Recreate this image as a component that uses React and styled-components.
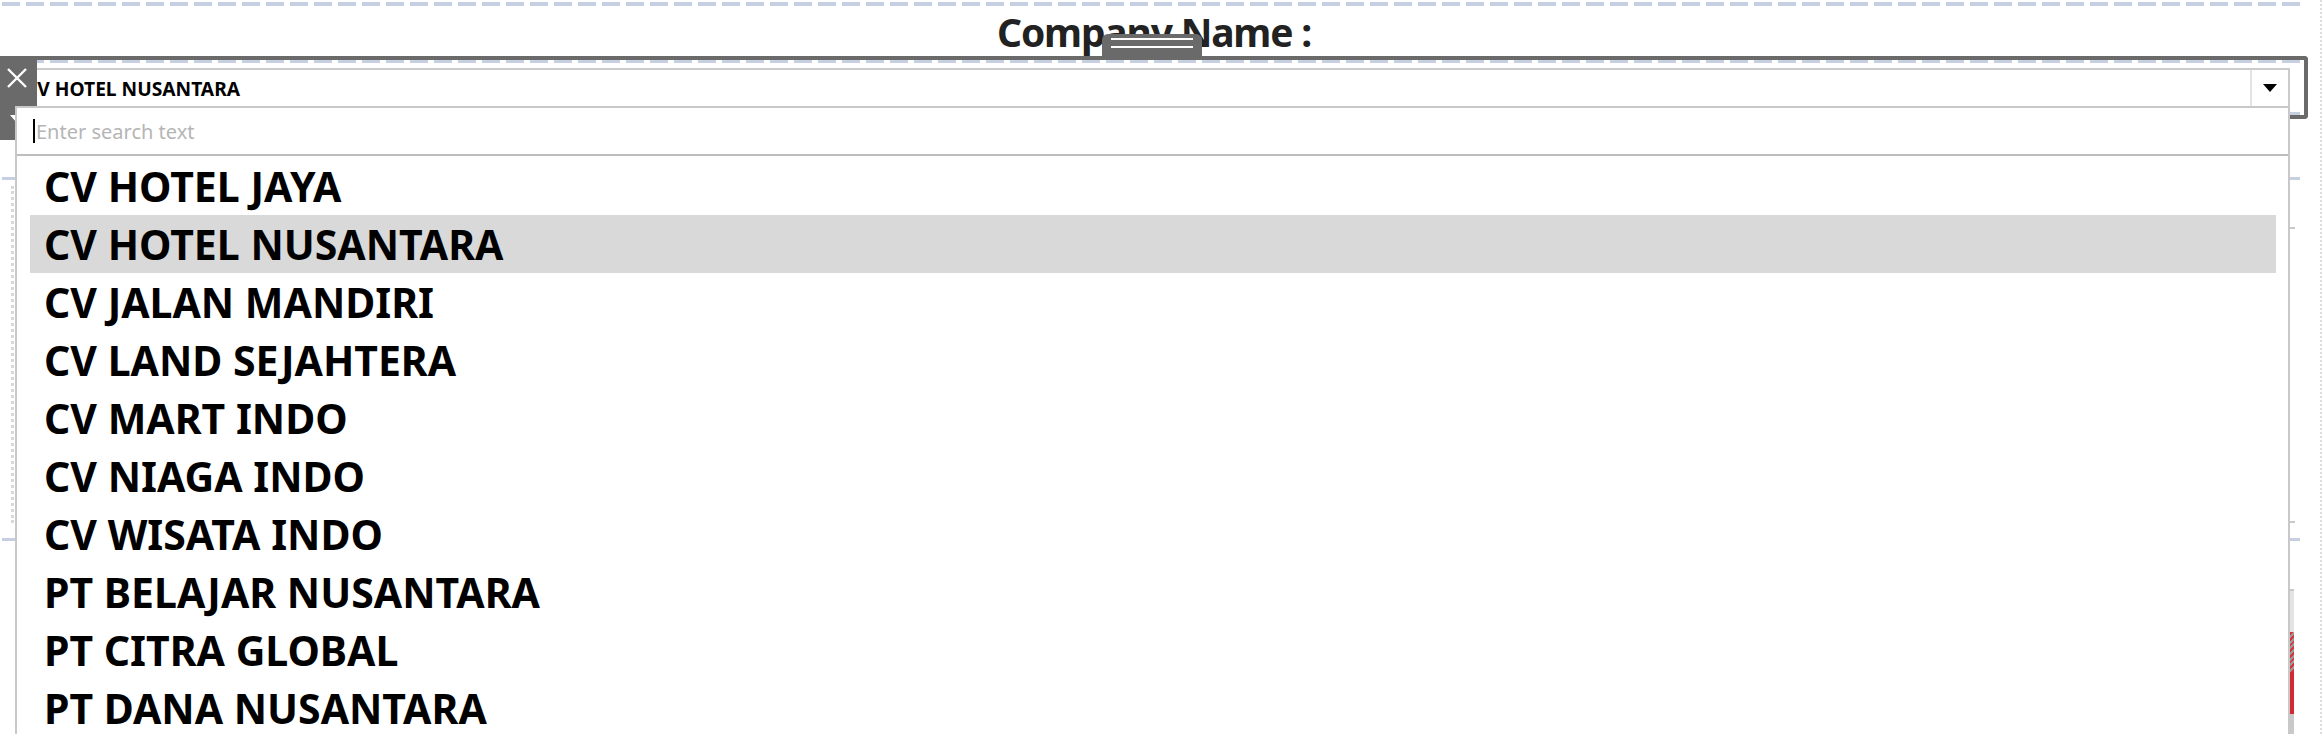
import React from 'react'
import styled, { createGlobalStyle } from 'styled-components'

const GlobalStyle = createGlobalStyle`
  html, body {
    margin: 0;
    padding: 0;
    background: #fff;
    overflow: hidden;
  }
  body {
    font-family: 'Noto Sans', 'Open Sans', sans-serif;
  }
`

const companies = [
  'CV HOTEL JAYA',
  'CV HOTEL NUSANTARA',
  'CV JALAN MANDIRI',
  'CV LAND SEJAHTERA',
  'CV MART INDO',
  'CV NIAGA INDO',
  'CV WISATA INDO',
  'PT BELAJAR NUSANTARA',
  'PT CITRA GLOBAL',
  'PT DANA NUSANTARA',
]

function App() {
  const selected = 'CV HOTEL NUSANTARA'

  return (
    <>
      <GlobalStyle />
      <Page>
        <Dashboard>
          <DashRule $h={4} $mt={2} />
          <TitleZone>Company Name :</TitleZone>

          <FilterFrame>
            <DashRule $h={3} />
            <ComboBox>
              <ComboValue>{selected}</ComboValue>
              <DropButton>
                <Caret />
              </DropButton>
            </ComboBox>
            <DashRule $h={3} $mt="auto" />
          </FilterFrame>

          <LowerZone>
            <DashRule $h={3} />
            <ZoneBody>
              <DottedGuide />
              <SideTicks>
                <Tick />
                <Tick />
              </SideTicks>
            </ZoneBody>
            <DashRule $h={3} />
          </LowerZone>

          <LegendZone>
            <LegendBar>
              <BarSeg $c="#e4e4e4" $h={41} />
              <BarSeg $dotted $h={40} />
              <BarSeg $c="#d22a2e" $h={42} />
              <BarSeg $c="#c9c9c9" $h={20} />
            </LegendBar>
          </LegendZone>
        </Dashboard>
        <Gutter />

        <ToolStrip>
          <svg width="20" height="20" viewBox="0 0 20 20">
            <path d="M1 1 L19 19 M19 1 L1 19" stroke="#fff" strokeWidth="2.4" fill="none" />
          </svg>
          <StripCaret />
        </ToolStrip>

        <Handle>
          <Grip />
          <Grip />
        </Handle>

        <Popup>
          <SearchRow>
            <TextCursor />
            <Placeholder>Enter search text</Placeholder>
          </SearchRow>
          <List>
            {companies.map((name) => (
              <Item key={name} $active={name === selected}>
                {name}
              </Item>
            ))}
          </List>
        </Popup>
      </Page>
    </>
  )
}

const Page = styled.div`
  position: relative;
  display: flex;
  width: 2322px;
  height: 734px;
  overflow: hidden;
`

const Dashboard = styled.div`
  display: flex;
  flex-direction: column;
  width: 2308px;
  flex-shrink: 0;
`

const Gutter = styled.div`
  flex: 1;
  border-right: 2px dotted #dcdcdc;
`

const DashRule = styled.div`
  flex-shrink: 0;
  height: ${(p) => p.$h}px;
  margin-top: ${(p) => (p.$mt === 'auto' ? 'auto' : `${p.$mt || 0}px`)};
  margin-left: 2px;
  width: 2298px;
  background-image: linear-gradient(to right, #c6d0e2 18px, transparent 18px);
  background-size: 24px 100%;
`

const TitleZone = styled.div`
  box-sizing: border-box;
  height: 50px;
  padding-top: 2px;
  text-align: center;
  font-size: 39px;
  line-height: 48px;
  font-weight: 700;
  letter-spacing: -1.2px;
  color: #222;
`

const FilterFrame = styled.div`
  box-sizing: border-box;
  display: flex;
  flex-direction: column;
  height: 64px;
  border: 4px solid #6a6a6a;
  border-left: none;
  border-radius: 0 4px 4px 0;
`

const ComboBox = styled.div`
  box-sizing: border-box;
  display: flex;
  height: 40px;
  margin: 5px 14px 0 16px;
  border: 2px solid #cbcbcb;
  border-bottom: none;
  background: #fff;
`

const ComboValue = styled.div`
  flex: 1;
  padding-left: 7px;
  font-size: 19.2px;
  line-height: 38px;
  font-weight: 700;
  color: #000;
  white-space: nowrap;
`

const DropButton = styled.div`
  display: flex;
  align-items: center;
  justify-content: center;
  width: 36px;
  border-left: 2px solid #e4e4e4;
`

const Caret = styled.div`
  width: 0;
  height: 0;
  border-left: 7px solid transparent;
  border-right: 7px solid transparent;
  border-top: 8px solid #000;
  margin-top: -2px;
`

const LowerZone = styled.div`
  display: flex;
  flex-direction: column;
  height: 368px;
  margin-top: 58px;
`

const ZoneBody = styled.div`
  flex: 1;
  display: flex;
  justify-content: space-between;
  padding: 6px 0 15px 11px;
`

const DottedGuide = styled.div`
  width: 0;
  border-left: 3px dotted #d8d8d8;
`

const SideTicks = styled.div`
  display: flex;
  flex-direction: column;
  justify-content: space-between;
  padding: 41px 13px 0 0;
`

const Tick = styled.div`
  width: 7px;
  height: 2px;
  background: #c8c8c8;
`

const LegendZone = styled.div`
  display: flex;
  justify-content: flex-end;
  margin-top: 47px;
  padding-right: 14px;
  border-top: 1px solid #fff;
`

const LegendBar = styled.div`
  display: flex;
  flex-direction: column;
  width: 6px;
  border-top: 2px solid #c8c8c8;
`

const BarSeg = styled.div`
  height: ${(p) => p.$h}px;
  background: ${(p) =>
    p.$dotted
      ? 'repeating-linear-gradient(135deg, #9a9a9a 0 2px, #d8343a 2px 4px)'
      : p.$c};
`

const ToolStrip = styled.div`
  position: absolute;
  top: 56px;
  left: 0;
  box-sizing: border-box;
  width: 37px;
  height: 84px;
  padding: 12px 0 0 7px;
  background: #6a6a6a;
  display: flex;
  flex-direction: column;
  align-items: flex-start;
`

const StripCaret = styled.div`
  margin: 27px 0 0 3px;
  width: 0;
  height: 0;
  border-left: 6px solid transparent;
  border-right: 6px solid transparent;
  border-top: 7px solid #fff;
`

const Handle = styled.div`
  position: absolute;
  top: 34px;
  left: 1102px;
  box-sizing: border-box;
  width: 100px;
  height: 26px;
  padding: 4px 9px 0;
  background: #6a6a6a;
  border-radius: 6px 6px 0 0;
  display: flex;
  flex-direction: column;
  gap: 6px;
`

const Grip = styled.div`
  height: 2px;
  background: #fff;
`

const Popup = styled.div`
  position: absolute;
  top: 106px;
  left: 15px;
  box-sizing: border-box;
  width: 2275px;
  height: 660px;
  background: #fff;
  border: 2px solid #c8c8c8;
  border-bottom: none;
`

const SearchRow = styled.div`
  display: flex;
  align-items: center;
  height: 46px;
  padding-left: 16px;
  border-bottom: 2px solid #bdbdbd;
`

const TextCursor = styled.div`
  width: 2px;
  height: 24px;
  background: #000;
`

const Placeholder = styled.span`
  margin-left: 1px;
  font-size: 20px;
  color: #b5b5b5;
  white-space: nowrap;
`

const List = styled.div`
  padding: 1px 12px 0 13px;
`

const Item = styled.div`
  height: 58px;
  padding-left: 14px;
  font-size: 41px;
  line-height: 58px;
  font-weight: 700;
  color: #000;
  white-space: nowrap;
  background: ${(p) => (p.$active ? '#d9d9d9' : 'transparent')};
`

export default App
